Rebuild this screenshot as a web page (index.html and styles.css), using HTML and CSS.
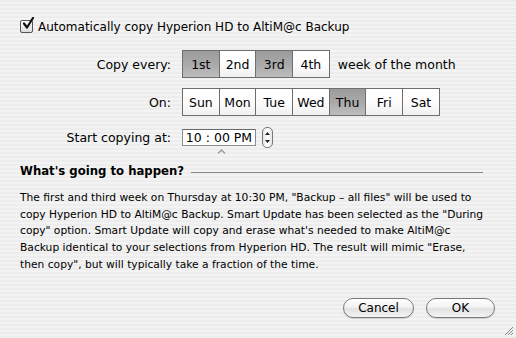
FILE: index.html
```html
<!DOCTYPE html>
<html lang="en">
<head>
  <meta charset="UTF-8" />
  <title>Schedule</title>
  <link rel="stylesheet" href="styles.css">
</head>
<body>
  <div class="dialog">
    <label class="auto-row">
      <span class="checkbox">
        <svg width="14" height="14" viewBox="0 0 14 14"><path d="M3 6.5 L6 10.5 L12 1" fill="none" stroke="#111" stroke-width="2.2" stroke-linecap="round" stroke-linejoin="round"/></svg>
      </span>
      Automatically copy Hyperion HD to AltiM@c Backup
    </label>

    <div class="schedule">
      <div class="label">Copy every:</div>
      <div class="control">
        <div class="segmented">
          <span class="seg on">1st</span>
          <span class="seg">2nd</span>
          <span class="seg on">3rd</span>
          <span class="seg">4th</span>
        </div>
        <span class="suffix">week of the month</span>
      </div>

      <div class="label">On:</div>
      <div class="control">
        <div class="segmented">
          <span class="seg">Sun</span>
          <span class="seg">Mon</span>
          <span class="seg">Tue</span>
          <span class="seg">Wed</span>
          <span class="seg on">Thu</span>
          <span class="seg">Fri</span>
          <span class="seg">Sat</span>
        </div>
      </div>

      <div class="label">Start copying at:</div>
      <div class="control time-row">
        <div class="time-wrap">
          <div class="time-field">10 : 00 PM</div>
          <svg class="caret" width="9" height="5" viewBox="0 0 9 5"><path d="M1 4.5 L4.5 1 L8 4.5" fill="none" stroke="#9a9a9a" stroke-width="1.4"/></svg>
        </div>
        <div class="stepper">
          <svg width="11" height="21" viewBox="0 0 11 21"><path d="M3 8 L5.5 5 L8 8 Z M3 13 L5.5 16 L8 13 Z" fill="#222"/></svg>
        </div>
      </div>
    </div>

    <div class="section-head">
      <h2>What's going to happen?</h2>
      <span class="rule"></span>
    </div>

    <p class="summary">
      The first and third week on Thursday at 10:30 PM, "Backup – all files" will be used to<br>
      copy Hyperion HD to AltiM@c Backup. Smart Update has been selected as the "During<br>
      copy" option. Smart Update will copy and erase what's needed to make AltiM@c<br>
      Backup identical to your selections from Hyperion HD. The result will mimic "Erase,<br>
      then copy", but will typically take a fraction of the time.
    </p>

    <div class="buttons">
      <button class="btn cancel">Cancel</button>
      <button class="btn ok">OK</button>
    </div>

    <svg class="grip" width="11" height="11" viewBox="0 0 11 11">
      <path d="M10 2 L2 10 M10 5 L5 10 M10 8 L8 10" stroke="#8a8a8a" stroke-width="1"/>
    </svg>
  </div>
</body>
</html>
```

FILE: styles.css
```css
body {
  margin: 0;
  font-family: 'DejaVu Sans', 'Lucida Grande', sans-serif;
  color: #000;
}

.dialog {
  position: relative;
  width: 516px;
  height: 338px;
  box-sizing: border-box;
  padding: 19px 0 0 20px;
  background: repeating-linear-gradient(#ededed 0, #ededed 2px, #f3f3f3 2px, #f3f3f3 4px);
  overflow: hidden;
}

.auto-row {
  display: flex;
  align-items: center;
  gap: 5px;
  font-size: 12px;
  height: 15px;
}

.checkbox {
  width: 11px;
  height: 11px;
  border: 1px solid #555;
  border-radius: 2px;
  background: linear-gradient(#fff, #dcdcdc);
  position: relative;
}

.checkbox svg {
  position: absolute;
  left: 0;
  top: -4px;
}

.schedule {
  display: grid;
  grid-template-columns: 151px auto;
  column-gap: 11px;
  row-gap: 10px;
  margin-top: 16px;
  font-size: 12.5px;
}

.label {
  text-align: right;
  align-self: center;
}

.control {
  display: flex;
  align-items: center;
}

.segmented {
  display: flex;
  border: 1px solid #6e6e6e;
  height: 26px;
}

.seg {
  width: 35.7px;
  display: flex;
  align-items: center;
  justify-content: center;
  background: linear-gradient(#ffffff, #fdfdfd 50%, #f0f0f0);
}

.seg + .seg {
  border-left: 1px solid #6e6e6e;
}

.seg.on {
  background: linear-gradient(#9b9b9b, #a9a9a9 50%, #bdbdbd);
}

.suffix {
  margin-left: 8px;
}

.time-row {
  height: 21px;
  margin-top: 1px;
}

.time-wrap {
  position: relative;
}

.time-field {
  width: 72px;
  height: 15px;
  line-height: 15px;
  border: 1px solid #8c8c8c;
  border-top-color: #6a6a6a;
  background: #fff;
  text-align: center;
}

.caret {
  position: absolute;
  left: 35px;
  top: 20px;
}

.stepper {
  margin-left: 6px;
  width: 11px;
  height: 21px;
  box-sizing: border-box;
  border: 1px solid #777;
  border-radius: 5px;
  background: linear-gradient(90deg, #e6e6e6, #fff 50%, #e6e6e6);
  display: flex;
}

.stepper svg {
  margin: -1px;
}

.section-head {
  display: flex;
  align-items: center;
  margin-top: 16px;
  margin-right: 33px;
}

.section-head h2 {
  margin: 0;
  font-size: 11.7px;
  font-weight: bold;
}

.rule {
  flex: 1;
  border-top: 1px solid #888;
  margin: 3px 0 0 7px;
}

.summary {
  margin: 12px 0 0;
  font-size: 10.7px;
  line-height: 16.7px;
  white-space: nowrap;
}

.buttons {
  display: flex;
  justify-content: flex-end;
  gap: 12px;
  margin-top: 24px;
  margin-right: 21px;
}

.btn {
  height: 20px;
  padding: 0;
  font-family: inherit;
  font-size: 12px;
  color: #000;
  border: 1px solid #7a7a7a;
  border-radius: 10px;
  background: linear-gradient(#ffffff, #f2f2f2 45%, #e2e2e2 55%, #f4f4f4);
  box-shadow: 0 1px 1px rgba(0, 0, 0, 0.15);
}

.cancel {
  width: 71px;
}

.ok {
  width: 69px;
}

.grip {
  position: absolute;
  right: 2px;
  bottom: 2px;
}
```
